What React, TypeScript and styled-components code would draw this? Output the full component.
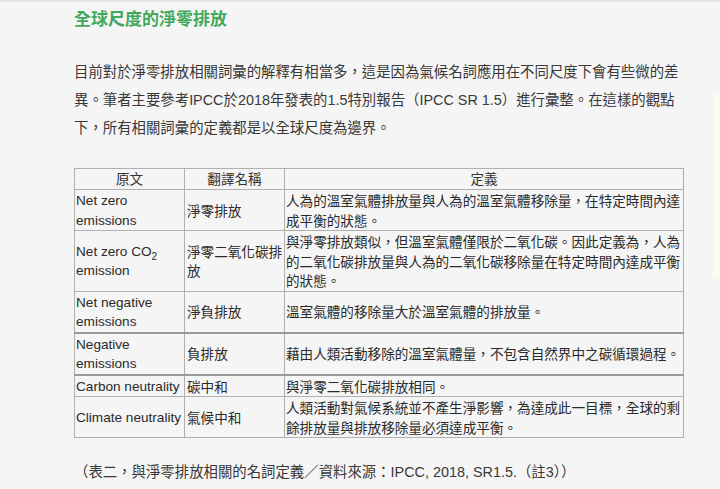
import React from "react";
import styled, { createGlobalStyle } from "styled-components";

const Global = createGlobalStyle`
  html, body { margin: 0; padding: 0; background: #f5f5f5; }
  body { font-family: "Liberation Sans", "Noto Sans CJK TC", sans-serif; }
`;

const Page = styled.div`
  position: relative;
  width: 720px;
  height: 489px;
  overflow: hidden;
  border-top: 2px solid #e6e6e6;
  box-sizing: border-box;
  background: #f5f5f5;
`;

const Content = styled.div`
  padding: 5px 0 0 74px;
  width: 609px;
`;

const Title = styled.h2`
  margin: 0;
  font-family: "Noto Sans CJK TC", sans-serif;
  font-size: 17px;
  line-height: 22px;
  font-weight: 700;
  color: #42a85c;
`;

const Para = styled.p`
  margin: 29px 0 0;
  font-family: "Liberation Sans", "Noto Sans CJK TC", sans-serif;
  font-size: 14.4px;
  line-height: 28px;
  color: #383838;
`;

const Table = styled.table`
  margin-top: 26px;
  border-collapse: collapse;
  table-layout: fixed;
  width: 609px;
  font-family: "Liberation Sans", "Noto Sans CJK TC", sans-serif;
  font-size: 13.6px;
  line-height: 19.5px;
  color: #222;
  border-bottom: 1px solid #b0b0b0;
`;

const Row = styled.tr<{ $heavy?: boolean }>`
  border-top: ${(p) => (p.$heavy ? "2px solid #9a9a9a" : "1px solid #b0b0b0")};
`;

const Th = styled.th`
  border: 1px solid #b0b0b0;
  font-weight: 400;
  font-family: "Noto Sans CJK TC", sans-serif;
  padding: 0 2px;
  height: 20px;
  text-align: center;
  color: #333;
`;

const Td = styled.td<{ $cjk?: boolean; $pad?: number }>`
  border-left: 1px solid #b0b0b0;
  border-right: 1px solid #b0b0b0;
  padding: 1px 0 0 ${(p) => p.$pad ?? 1}px;
  vertical-align: middle;
  text-align: left;
  font-family: ${(p) =>
    p.$cjk ? `"Noto Sans CJK TC", sans-serif` : `"Liberation Sans", "Noto Sans CJK TC", sans-serif`};
  font-size: 13.6px;
  color: #2a2a2a;
`;

const Caption = styled.p`
  margin: 20px 0 0;
  font-size: 14.4px;
  line-height: 28px;
  color: #383838;
  font-family: "Liberation Sans", "Noto Sans CJK TC", sans-serif;
`;

const EdgePanel = styled.div`
  position: absolute;
  left: 713px;
  top: 92px;
  width: 7px;
  height: 184px;
  background: #fbfbef;
`;

const Sub = styled.sub`
  font-size: 10px;
  line-height: 0;
`;

const rows: { en: React.ReactNode; zh: string; def: string; heavy?: boolean }[] = [
  {
    en: (
      <>
        Net zero
        <br />
        emissions
      </>
    ),
    zh: "淨零排放",
    def: "人為的溫室氣體排放量與人為的溫室氣體移除量，在特定時間內達成平衡的狀態。",
  },
  {
    en: (
      <>
        Net zero CO<Sub>2</Sub>
        <br />
        emission
      </>
    ),
    zh: "淨零二氧化碳排放",
    def: "與淨零排放類似，但溫室氣體僅限於二氧化碳。因此定義為，人為的二氧化碳排放量與人為的二氧化碳移除量在特定時間內達成平衡的狀態。",
  },
  {
    en: (
      <>
        Net negative
        <br />
        emissions
      </>
    ),
    zh: "淨負排放",
    def: "溫室氣體的移除量大於溫室氣體的排放量。",
  },
  {
    en: (
      <>
        Negative
        <br />
        emissions
      </>
    ),
    zh: "負排放",
    def: "藉由人類活動移除的溫室氣體量，不包含自然界中之碳循環過程。",
    heavy: true,
  },
  {
    en: "Carbon neutrality",
    zh: "碳中和",
    def: "與淨零二氧化碳排放相同。",
    heavy: true,
  },
  {
    en: "Climate neutrality",
    zh: "氣候中和",
    def: "人類活動對氣候系統並不產生淨影響，為達成此一目標，全球的剩餘排放量與排放移除量必須達成平衡。",
  },
];

export default function App() {
  return (
    <Page>
      <Global />
      <Content>
        <Title>全球尺度的淨零排放</Title>
        <Para>
          目前對於淨零排放相關詞彙的解釋有相當多，這是因為氣候名詞應用在不同尺度下會有些微的差異。筆者主要參考IPCC於2018年發表的1.5特別報告（IPCC
          SR 1.5）進行彙整。在這樣的觀點下，所有相關詞彙的定義都是以全球尺度為邊界。
        </Para>
        <Table>
          <colgroup>
            <col style={{ width: "110px" }} />
            <col style={{ width: "100px" }} />
            <col style={{ width: "399px" }} />
          </colgroup>
          <thead>
            <tr>
              <Th>原文</Th>
              <Th>翻譯名稱</Th>
              <Th>定義</Th>
            </tr>
          </thead>
          <tbody>
            {rows.map((r, i) => (
              <Row key={i} $heavy={r.heavy}>
                <Td>{r.en}</Td>
                <Td $cjk $pad={2}>
                  {r.zh}
                </Td>
                <Td $cjk>{r.def}</Td>
              </Row>
            ))}
          </tbody>
        </Table>
        <Caption>（表二，與淨零排放相關的名詞定義／資料來源：IPCC, 2018, SR1.5.（註3））</Caption>
      </Content>
      <EdgePanel />
    </Page>
  );
}
